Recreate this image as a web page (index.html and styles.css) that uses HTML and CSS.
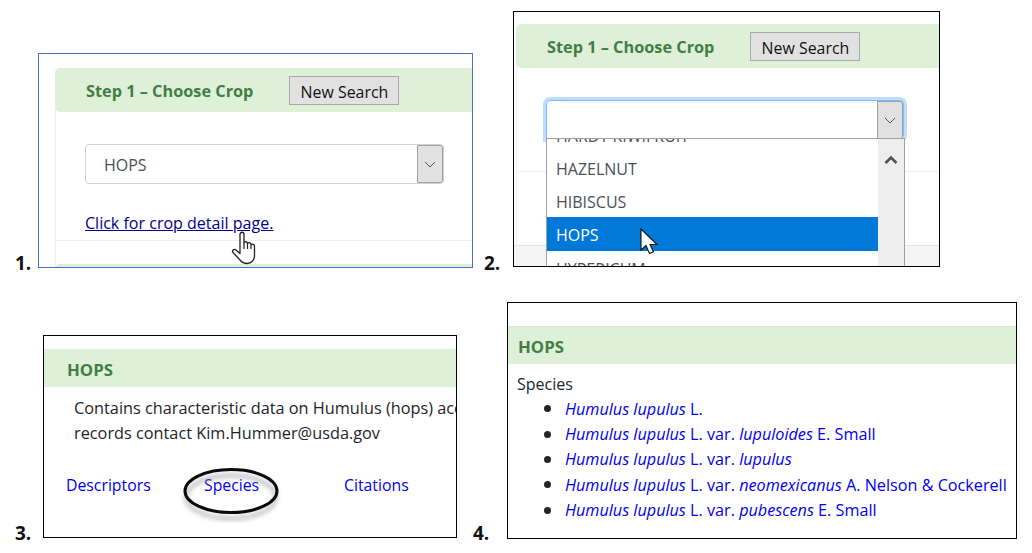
FILE: index.html
```html
<!DOCTYPE html>
<html lang="en">
<head>
<meta charset="utf-8">
<title>Crop search steps</title>
<link rel="stylesheet" href="styles.css">
</head>
<body>
<section class="shot shot-1">
  <div class="card card-1">
    <div class="card-head round"><strong class="title">Step 1 – Choose Crop</strong><button class="btn">New Search</button></div>
    <div class="card-body">
      <div class="select closed"><span class="value">HOPS</span>
        <span class="chev"><svg width="12" height="7" viewBox="0 0 12 7"><path d="M1 1l5 5 5-5" fill="none" stroke="#555" stroke-width="1"/></svg></span>
      </div>
      <a class="link crop-link" href="#">Click for crop detail page.</a>
    </div>
    <div class="next-head"></div>
  </div>
  <svg class="hand" width="28" height="34" viewBox="0 0 28 34"><path d="M9 3.500c0-3 4-3 4 0V12c1-2 3-1.500 3.500 .5c1-1.500 3-1 3.500 1c1.500-1 3.500 0 3.500 2V25c0 4-3 7.500-7.500 7.500c-3.500 0-5-1-7-3.500L2 21.500c-1.500-2 1-4 3-2.500l4 3.500z" fill="#fff" stroke="#222" stroke-width="1.300" stroke-linejoin="round"/><path d="M13 12v6M16.500 13v5M20 14v4" stroke="#222" stroke-width="1.200" fill="none"/></svg>
</section>
<div class="num num-1">1.</div>

<section class="shot shot-2">
  <div class="card card-2">
    <div class="card-head round"><strong class="title">Step 1 – Choose Crop</strong><button class="btn">New Search</button></div>
    <div class="card-body">
      <div class="select open"><span class="value"></span>
        <span class="chev"><svg width="12" height="7" viewBox="0 0 12 7"><path d="M1 1l5 5 5-5" fill="none" stroke="#555" stroke-width="1"/></svg></span>
      </div>
    </div>
    <div class="foot"></div>
  </div>
  <div class="list">
    <div class="items">
      <div class="item">HARDY KIWIFRUIT</div>
      <div class="item">HAZELNUT</div>
      <div class="item">HIBISCUS</div>
      <div class="item selected">HOPS</div>
      <div class="item">HYPERICUM</div>
    </div>
    <div class="scroll"><svg width="14" height="10" viewBox="0 0 14 10"><path d="M1.500 8L7 2.500 12.500 8" fill="none" stroke="#505050" stroke-width="2.600"/></svg></div>
  </div>
  <svg class="arrow" width="20" height="29" viewBox="0 0 20 29"><path d="M1 1v21l5-4.500 3.500 8 4-1.800L10 16.500h7z" fill="#fff" stroke="#111" stroke-width="1.100" stroke-linejoin="miter"/></svg>
</section>
<div class="num num-2">2.</div>

<section class="shot shot-3">
  <div class="band band-3"><strong class="title caps">HOPS</strong></div>
  <p class="desc">Contains characteristic data on Humulus (hops) accessions. For further information on these<br>records contact Kim.Hummer@usda.gov</p>
  <nav class="tabs">
    <a class="link plain tab-a" href="#">Descriptors</a>
    <a class="link plain tab-b" href="#">Species</a>
    <a class="link plain tab-c" href="#">Citations</a>
  </nav>
  <svg class="oval" width="104" height="58" viewBox="0 0 104 58">
    <defs><filter id="sh" x="-20%" y="-20%" width="140%" height="150%"><feGaussianBlur stdDeviation="2.500"/></filter></defs>
    <ellipse cx="52" cy="29" rx="45" ry="21.500" fill="none" stroke="#999" stroke-width="2.500" filter="url(#sh)" transform="translate(0 3)"/>
    <ellipse cx="52" cy="26" rx="46" ry="21.500" fill="none" stroke="#0a0a0a" stroke-width="3"/>
  </svg>
</section>
<div class="num num-3">3.</div>

<section class="shot shot-4">
  <div class="band band-4"><strong class="title caps">HOPS</strong></div>
  <div class="species">Species</div>
  <ul class="species-list">
    <li><a class="link plain" href="#"><em>Humulus lupulus</em> L.</a></li>
    <li><a class="link plain" href="#"><em>Humulus lupulus</em> L. var. <em>lupuloides</em> E. Small</a></li>
    <li><a class="link plain" href="#"><em>Humulus lupulus</em> L. var. <em>lupulus</em></a></li>
    <li><a class="link plain" href="#"><em>Humulus lupulus</em> L. var. <em>neomexicanus</em> A. Nelson &amp; Cockerell</a></li>
    <li><a class="link plain" href="#"><em>Humulus lupulus</em> L. var. <em>pubescens</em> E. Small</a></li>
  </ul>
</section>
<div class="num num-4">4.</div>
</body>
</html>
```
FILE: styles.css
```css
* { box-sizing: border-box; }
html, body { margin: 0; padding: 0; }
body {
  position: relative;
  width: 1032px;
  height: 553px;
  overflow: hidden;
  background: #fff;
  font-family: "Open Sans", "Noto Sans", sans-serif;
  font-size: 16px;
  color: #212529;
}
.shot { position: absolute; overflow: hidden; background: #fff; border: 1px solid #000; }
.shot-1 { left: 38px; top: 53px; width: 435px; height: 215px; border-color: #4472c4; }
.shot-2 { left: 513px; top: 11px; width: 427px; height: 256px; }
.shot-3 { left: 43px; top: 335px; width: 414px; height: 203px; }
.shot-4 { left: 507px; top: 302px; width: 510px; height: 237px; }

.num { position: absolute; font-size: 19px; font-weight: 700; color: #111; line-height: 20px; }
.num-1 { left: 15px; top: 253px; }
.num-2 { left: 484px; top: 253px; }
.num-3 { left: 15px; top: 523px; }
.num-4 { left: 473px; top: 523px; }

.card { width: 520px; border: 1px solid #eee; border-radius: 5px; }
.card-1 { margin: 14px 0 0 16px; }
.card-2 { margin: 12px 0 0 2px; position: relative; height: 400px; }
.card-head {
  display: flex;
  align-items: center;
  height: 44px;
  padding-left: 31px;
  background: #dff0d8;
}
.round { border-radius: 5px 5px 0 0; margin: -1px -1px 0; border-bottom-left-radius: 5px; }
.title { padding-top: 2px; font-weight: 700; color: #3f7f45; font-size: 16.300px; white-space: nowrap; }
.title.caps { font-size: 16.800px; }
.btn {
  height: 29px;
  width: 110px;
  margin-left: 36px;
  padding: 3px 0 0;
  font: inherit;
  font-size: 15.900px;
  color: #111;
  background: #e1e1e1;
  border: 1px solid #a8a8a8;
}
.card-body { padding: 32px 0 0 29px; height: 129px; border-bottom: 1px solid #eee; }
.card-2 .card-body { height: 104px; }
.select {
  position: relative;
  display: flex;
  align-items: center;
  width: 359px;
  height: 40px;
  padding: 2px 0 0 18px;
  color: #495057;
  background: #fff;
  border: 1px solid #ced4da;
  border-radius: 4px;
}
.select.open {
  width: 358px;
  height: 39px;
  border-color: #80bdff;
  box-shadow: 0 0 0 3px #bfdeff;
  border-bottom-left-radius: 0;
}
.chev {
  position: absolute;
  right: 0;
  top: 0;
  bottom: 0;
  width: 26px;
  display: flex;
  align-items: center;
  justify-content: center;
  background: #e1e1e1;
  border: 1px solid #a0a0a0;
  border-radius: 0 3px 3px 0;
}
.open .chev { border-bottom: 0; }
.link { color: #00008b; }
.plain { color: #0000ee; text-decoration: none; }
.crop-link { display: block; margin-top: 28px; font-size: 16.050px; line-height: 22px; white-space: nowrap; }
.next-head { height: 40px; margin: 23px -1px 0; background: #dff0d8; border-radius: 5px 5px 0 0; }
.hand { position: absolute; left: 192px; top: 177px; }

.foot { position: absolute; left: -3px; right: 0; top: 220px; height: 40px; background: #f5f5f5; border-top: 1px solid #e4e4e4; }
.list {
  position: absolute;
  left: 32px;
  top: 126px;
  width: 359px;
  height: 140px;
  display: flex;
  overflow: hidden;
  background: #fff;
  border: 1px solid #a0a0a0;
  border-bottom: 0;
}
.items { flex: 1; margin-top: -21px; }
.item { height: 33px; padding-left: 9px; line-height: 37px; color: #495057; white-space: nowrap; }
.item.selected { height: 34px; line-height: 36px; background: #0078d7; color: #fff; }
.scroll { width: 26px; padding: 9px 0 0 6px; background: #eee; }
.arrow { position: absolute; left: 126px; top: 216px; }

.band { display: flex; align-items: center; height: 38px; background: #dff0d8; }
.band-3 { margin-top: 13px; padding-left: 23px; }
.band-4 { margin-top: 23px; padding-left: 10px; border-top: 1px solid #d3e5cb; }
.desc { margin: 9px 0 0 30px; font-size: 16.300px; line-height: 25px; white-space: nowrap; }
.tabs { position: relative; height: 24px; margin-top: 28px; font-size: 15.800px; }
.tab-a { position: absolute; left: 22px; }
.tab-b { position: absolute; left: 160px; }
.tab-c { position: absolute; left: 300px; }
.oval { position: absolute; left: 135px; top: 129px; }

.species { margin: 8px 0 0 9px; line-height: 24px; }
.species-list { margin: 0; padding: 0 0 0 36px; list-style: none; }
.species-list li { display: flex; align-items: center; height: 25.400px; font-size: 16.200px; white-space: pre; }
.species-list li::before { content: ""; width: 7px; height: 7px; margin-right: 14px; border-radius: 50%; background: #212529; }
```
